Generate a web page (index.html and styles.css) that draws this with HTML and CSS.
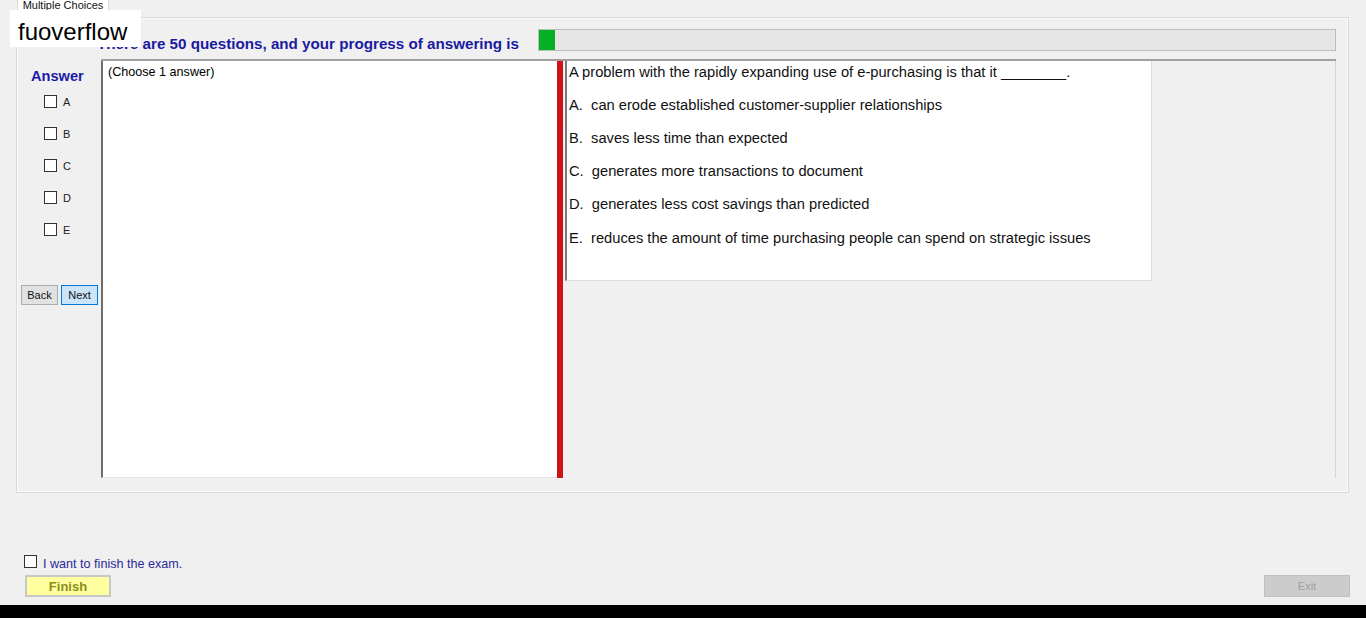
FILE: index.html
```html
<!DOCTYPE html>
<html lang="en">
<head>
    <meta charset="UTF-8">
    <title>Multiple Choices</title>
    <link rel="stylesheet" href="styles.css">
</head>
<body>
    <div class="watermark">fuoverflow</div>

    <div class="tabs">
        <div class="tab">Multiple Choices</div>
    </div>

    <div class="panel">
        <div class="head">
            <div class="head-text">There are 50 questions, and your progress of answering is</div>
            <div class="progress"><div class="progress-fill"></div></div>
        </div>

        <div class="body">
            <div class="answers">
                <div class="answers-title">Answer</div>
                <label class="option"><span class="box"></span>A</label>
                <label class="option"><span class="box"></span>B</label>
                <label class="option"><span class="box"></span>C</label>
                <label class="option"><span class="box"></span>D</label>
                <label class="option"><span class="box"></span>E</label>
                <div class="nav">
                    <button class="btn">Back</button>
                    <button class="btn btn-next">Next</button>
                </div>
            </div>

            <div class="split">
                <div class="pane-left">(Choose 1 answer)</div>
                <div class="splitter"></div>
                <div class="pane-right">
                    <div class="question">
                        <p>A problem with the rapidly expanding use of e-purchasing is that it ________.</p>
                        <p>A.&nbsp; can erode established customer-supplier relationships</p>
                        <p>B.&nbsp; saves less time than expected</p>
                        <p>C.&nbsp; generates more transactions to document</p>
                        <p>D.&nbsp; generates less cost savings than predicted</p>
                        <p>E.&nbsp; reduces the amount of time purchasing people can spend on strategic issues</p>
                    </div>
                </div>
            </div>
        </div>
    </div>

    <div class="footer">
        <div class="finish">
            <label class="confirm"><span class="box"></span><span class="confirm-text">I want to finish the exam.</span></label>
            <button class="btn-finish">Finish</button>
        </div>
        <button class="btn-exit">Exit</button>
    </div>

    <div class="taskbar"></div>
</body>
</html>
```

FILE: styles.css
```css
body {
    margin: 0;
    height: 618px;
    overflow: hidden;
    display: flex;
    flex-direction: column;
    background-color: #f0f0f0;
    font-family: "Liberation Sans", Arial, sans-serif;
    color: #000;
}

.watermark {
    position: absolute;
    left: 10px;
    top: 10px;
    width: 123px;
    height: 37px;
    padding-left: 8px;
    background-color: #fff;
    font-size: 24px;
    line-height: 44px;
}

.tabs {
    height: 17px;
    padding-left: 17px;
}

.tab {
    width: 90px;
    height: 12px;
    border: 1px solid #d9d9d9;
    border-top: none;
    background-color: #fff;
    font-size: 11px;
    line-height: 10px;
    text-align: center;
    overflow: hidden;
    color: #111;
}

.panel {
    margin-left: 16px;
    width: 1331px;
    height: 474px;
    border: 1px solid #dadada;
    box-shadow: inset 0 0 0 1px #fbfbfb;
    display: flex;
    flex-direction: column;
}

.head {
    height: 41px;
    display: flex;
    justify-content: space-between;
    padding-left: 80px;
    padding-right: 12px;
}

.head-text {
    margin-top: 17px;
    font-size: 15.2px;
    line-height: 17px;
    font-weight: bold;
    color: #1a1aa0;
}

.progress {
    margin-top: 11px;
    width: 796px;
    height: 20px;
    border: 1px solid #bcbcbc;
    background-color: #e6e6e6;
}

.progress-fill {
    width: 16px;
    height: 100%;
    background-color: #06b025;
}

.body {
    display: flex;
    height: 419px;
}

.answers {
    width: 84px;
    display: flex;
    flex-direction: column;
}

.answers-title {
    margin: 9px 0 10px 14px;
    font-size: 14.6px;
    line-height: 17px;
    font-weight: bold;
    color: #1a1aa8;
}

.option {
    display: flex;
    align-items: center;
    height: 13px;
    margin: 0 0 19px 27px;
    font-size: 11px;
    color: #222;
}

.box {
    width: 11px;
    height: 11px;
    border: 1px solid #333;
    background-color: #fff;
    margin-right: 6px;
}

.nav {
    display: flex;
    gap: 3px;
    margin: 30px 0 0 4px;
}

.btn {
    width: 37px;
    height: 20px;
    padding: 0;
    border: 1px solid #adadad;
    background-color: #e1e1e1;
    font-family: "Liberation Sans", Arial, sans-serif;
    font-size: 11px;
    color: #111;
}

.btn-next {
    border-color: #0078d7;
    background-color: #cce4f7;
}

.split {
    width: 1235px;
    display: flex;
    border-top: 2px solid #a0a0a0;
}

.pane-left {
    width: 449px;
    padding: 4px 0 0 5px;
    border-left: 2px solid #6d6d6d;
    border-bottom: 1px solid #e3e3e3;
    background-color: #fff;
    font-size: 12.6px;
    line-height: 15px;
}

.splitter {
    width: 6px;
    margin-right: 2px;
    background-color: #d2121b;
}

.pane-right {
    flex: 1;
    border-right: 1px solid #d4d4d4;
}

.question {
    width: 584px;
    height: 216px;
    padding-top: 3px;
    border-left: 2px solid #7c7c7c;
    border-right: 1px solid #dcdcdc;
    border-bottom: 1px solid #dcdcdc;
    background-color: #fff;
}

.question p {
    margin: 0 0 17px 2px;
    font-size: 14.7px;
    line-height: 16px;
    color: #111;
}

.question p:last-child {
    margin-top: 18px;
}

.footer {
    flex: 1;
    display: flex;
    justify-content: space-between;
    align-items: flex-end;
    padding: 0 16px 8px 24px;
}

.finish {
    display: flex;
    flex-direction: column;
    gap: 7px;
}

.confirm {
    display: flex;
    align-items: flex-start;
    height: 13px;
    font-size: 12.6px;
    color: #2a2a9a;
}

.confirm-text {
    margin-top: 2px;
    line-height: 14px;
}

.btn-finish {
    width: 86px;
    height: 22px;
    margin-left: 1px;
    padding: 0;
    border: 2px solid #c8c8c8;
    background-color: #ffff9f;
    font-family: "Liberation Sans", Arial, sans-serif;
    font-size: 13px;
    font-weight: bold;
    color: #8c8c1c;
}

.btn-exit {
    width: 86px;
    height: 22px;
    padding: 0;
    border: 1px solid #bfbfbf;
    background-color: #cccccc;
    font-family: "Liberation Sans", Arial, sans-serif;
    font-size: 11px;
    color: #a0a0a0;
}

.taskbar {
    height: 13px;
    background-color: #000;
}
```
